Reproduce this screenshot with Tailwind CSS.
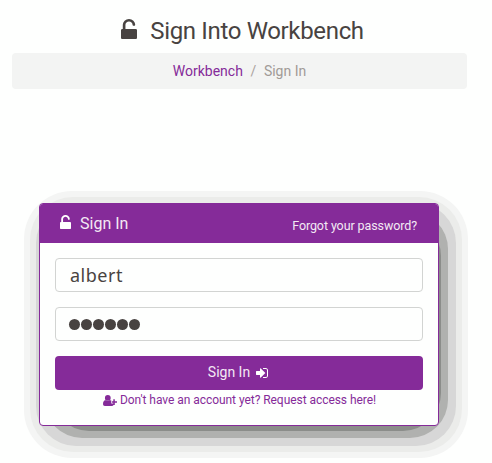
<!DOCTYPE html>
<html lang="en">
<head>
<meta charset="utf-8">
<title>Sign Into Workbench</title>
<script src="https://cdn.jsdelivr.net/npm/@tailwindcss/browser@4"></script>
</head>
<body class="bg-[#fefffe] font-['Roboto',sans-serif] text-[#484341] w-[492px] h-[463px] overflow-hidden">
<svg class="hidden">
  <symbol id="unlock" viewBox="0 0 1152 1536" preserveAspectRatio="none"><path d="M1056 768q40 0 68 28t28 68v576q0 40-28 68t-68 28h-960q-40 0-68-28t-28-68v-576q0-40 28-68t68-28h32v-320q0-185 131.500-316.500t316.500-131.500 316.500 131.500 131.500 316.500q0 26-19 45t-45 19h-64q-26 0-45-19t-19-45q0-106-75-181t-181-75-181 75-75 181v320h736z"/></symbol>
  <symbol id="enter" viewBox="0 256 1536 1280"><path d="M1184 896q0 26-19 45l-544 544q-19 19-45 19t-45-19-19-45v-288h-448q-26 0-45-19t-19-45v-384q0-26 19-45t45-19h448v-288q0-26 19-45t45-19 45 19l544 544q19 19 19 45zm352-352v704q0 119-84.500 203.500t-203.500 84.500h-320q-32 0-32-32v-64q0-32 32-32h320q66 0 113-47t47-113v-704q0-66-47-113t-113-47h-320q-32 0-32-32v-64q0-32 32-32h320q119 0 203.500 84.500t84.500 203.500z"/></symbol>
  <symbol id="user-plus" viewBox="0 0 14 11"><path d="M4.800 0a2.900 2.900 0 1 1 0 5.800a2.900 2.900 0 0 1 0-5.800zM2.400 5.200q2.400 1.700 4.800 0q.6 0 1.100.4v2.900h2.100v1.700q-.5.800-1.400.8H1.800Q0 11 0 9.200Q0 5.500 2.400 5.200zM10.300 4.200h1.500v2.100H14v1.500h-2.200V10h-1.500V7.800H9V6.300h1.300z"/></symbol>
</svg>

<div class="pl-3 pr-[25px]">
  <h1 class="h-[53px] pt-[13px] pl-[6px] flex justify-center items-start text-[24px] leading-[36px] tracking-[-0.34px]">
    <svg class="w-4 h-5 mt-[6px] mr-[13px] fill-current"><use href="#unlock"/></svg>
    <span>Sign Into Workbench</span>
  </h1>
  <nav class="h-9 rounded bg-[#f3f4f3] flex justify-center items-center text-[14px] leading-5">
    <a class="text-[#852b99]">Workbench</a><span class="w-[21px] text-center text-[#aaa39e]">/</span><span class="text-[#a19b97]">Sign In</span>
  </nav>
</div>

<main class="relative ml-[39px] mt-[114px] w-[400px] h-[223px]">
  <div class="absolute -inset-x-[22px] -inset-y-[22px] translate-x-[7px] translate-y-[10px] rounded-[48px] bg-[#f4f5f4]"></div>
  <div class="absolute -inset-4 translate-x-[7px] translate-y-[10px] rounded-[43px] bg-[#ebecea]"></div>
  <div class="absolute -inset-[10px] translate-x-[7px] translate-y-[10px] rounded-[40px] bg-[#d7d7d7]"></div>
  <div class="absolute -inset-[2px] translate-x-[7px] translate-y-[10px] rounded-[38px] bg-[#b0b1af]"></div>
  <div class="absolute inset-[5px] translate-x-[7px] translate-y-[10px] rounded-[38px] bg-[#8b8d8a]"></div>
  <section class="relative h-full rounded border border-[#852b99] bg-[#fefffe] overflow-hidden">
    <header class="h-[39px] bg-[#852b99] text-[#f3e9f4] pl-5 pr-[21px] flex justify-between">
      <div class="flex pt-2 text-[16px] leading-6">
        <svg class="w-[11px] h-[14px] mt-[3px] mr-[9px] fill-white"><use href="#unlock"/></svg>
        <span>Sign In</span>
      </div>
      <a class="pt-[12px] text-[12.500px] leading-5 tracking-[-0.1px]">Forgot your password?</a>
    </header>
    <div class="px-[15px] pt-[15px]">
      <div class="h-[34px] rounded border border-[#d2d4d2] pl-[14px] font-['Noto_Sans',sans-serif] text-[18px] leading-[33px] tracking-[0.5px]">albert</div>
      <div class="mt-[15px] h-[34px] rounded border border-[#d2d4d2] pl-[13px] flex items-center gap-px">
        <i class="size-[11px] rounded-full bg-[#484341]"></i><i class="size-[11px] rounded-full bg-[#484341]"></i><i class="size-[11px] rounded-full bg-[#484341]"></i><i class="size-[11px] rounded-full bg-[#484341]"></i><i class="size-[11px] rounded-full bg-[#484341]"></i><i class="size-[11px] rounded-full bg-[#484341]"></i>
      </div>
      <div class="mt-[15px] h-[34px] rounded bg-[#852b99] text-[#f3e9f4] flex items-center justify-center pb-[2px] pr-[2px] text-[14px] leading-5">
        <span>Sign In</span><svg class="w-3 h-[10px] mt-px ml-[6px] fill-white"><use href="#enter"/></svg>
      </div>
      <a class="flex items-center justify-center h-5 pl-px text-[12px] text-[#852b99] tracking-[-0.05px]"><svg class="w-[14px] h-[11px] mr-[3px] fill-current"><use href="#user-plus"/></svg><span>Don't have an account yet? Request access here!</span></a>
    </div>
  </section>
</main>
</body>
</html>
